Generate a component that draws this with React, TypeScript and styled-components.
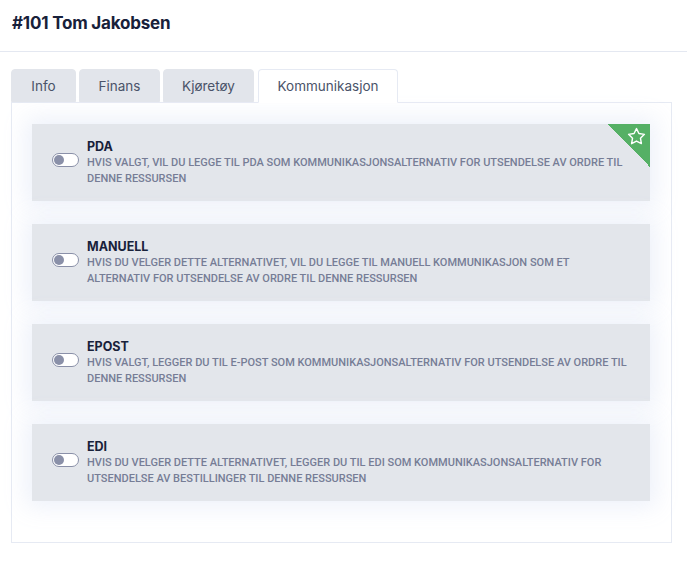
import React from "react";
import styled, { createGlobalStyle } from "styled-components";

const Global = createGlobalStyle`
  html, body { margin: 0; padding: 0; background: #ffffff; }
  body { font-family: Inter, "Noto Sans", sans-serif; }
`;

const Page = styled.div`
  width: 687px;
  height: 561px;
  background: #fff;
  display: flex;
  flex-direction: column;
`;

const Header = styled.header`
  height: 52px;
  box-sizing: border-box;
  border-bottom: 1px solid #e4e8f1;
  padding: 13px 12px 0;
`;

const Title = styled.h1`
  margin: 0;
  font-size: 17px;
  font-weight: 700;
  color: #18213a;
  letter-spacing: -0.2px;
`;

const Body = styled.div`
  padding: 17px 15px 0 11px;
`;

const Tabs = styled.div`
  display: flex;
  gap: 3px;
  height: 33px;
  position: relative;
  z-index: 1;
`;

const Tab = styled.div<{ $active?: boolean; $w: number }>`
  width: ${(p) => p.$w}px;
  box-sizing: border-box;
  display: flex;
  align-items: center;
  justify-content: center;
  font-size: 13.5px;
  color: #4a5369;
  border-radius: 4px 4px 0 0;
  background: ${(p) => (p.$active ? "#ffffff" : "#e2e5eb")};
  border: 1px solid ${(p) => (p.$active ? "#e6eaf3" : "#e2e5eb")};
  border-bottom: ${(p) => (p.$active ? "1px solid #fff" : "1px solid #e2e5eb")};
  height: ${(p) => (p.$active ? "34px" : "33px")};
  margin-left: ${(p) => (p.$active ? "1px" : "0")};
`;

const Panel = styled.div`
  border: 1px solid #e6eaf3;
  height: 441px;
  box-sizing: border-box;
  padding: 21px 21px 0 20px;
  display: flex;
  flex-direction: column;
  gap: 23px;
`;

const Card = styled.div`
  position: relative;
  overflow: hidden;
  height: 77px;
  background: #e3e6eb;
  box-shadow: 0 0 22px 6px rgba(235, 240, 250, 0.9);
  display: flex;
  align-items: center;
  padding: 0 22px 0 20px;
  gap: 8px;
`;

const Toggle = styled.div`
  flex: none;
  width: 27px;
  height: 14px;
  box-sizing: border-box;
  border-radius: 8px;
  background: #fff;
  border: 1px solid #8a90a8;
  position: relative;
  margin-top: -5px;
  &::after {
    content: "";
    position: absolute;
    left: 1px;
    top: 1px;
    width: 10px;
    height: 10px;
    border-radius: 50%;
    background: #8a90a8;
  }
`;

const Text = styled.div`
  display: flex;
  flex-direction: column;
`;

const CardTitle = styled.div`
  font-size: 12.5px;
  font-weight: 700;
  color: #18213a;
  line-height: 16px;
`;

const Desc = styled.div`
  font-family: Roboto, "Noto Sans", sans-serif;
  font-size: 11px;
  font-weight: 500;
  color: #767d96;
  line-height: 16px;
  text-transform: uppercase;
  letter-spacing: 0;
`;

const Corner = styled.div`
  position: absolute;
  top: 0;
  right: 0;
  width: 43px;
  height: 43px;
  background: linear-gradient(to bottom left, #55b065 50%, transparent 50%);
`;

const StarIcon = styled.svg`
  position: absolute;
  top: 3px;
  right: 4px;
`;

const items = [
  {
    t: "PDA",
    d: "Hvis valgt, vil du legge til PDA som kommunikasjonsalternativ for utsendelse av ordre til denne ressursen",
    star: true,
  },
  {
    t: "MANUELL",
    d: "Hvis du velger dette alternativet, vil du legge til manuell kommunikasjon som et alternativ for utsendelse av ordre til denne ressursen",
  },
  {
    t: "EPOST",
    d: "Hvis valgt, legger du til e-post som kommunikasjonsalternativ for utsendelse av ordre til denne ressursen",
  },
  {
    t: "EDI",
    d: "Hvis du velger dette alternativet, legger du til EDI som kommunikasjonsalternativ for utsendelse av bestillinger til denne ressursen",
  },
];

export default function App() {
  return (
    <Page>
      <Global />
      <Header>
        <Title>#101 Tom Jakobsen</Title>
      </Header>
      <Body>
        <Tabs>
          <Tab $w={65}>Info</Tab>
          <Tab $w={81}>Finans</Tab>
          <Tab $w={91}>Kjøretøy</Tab>
          <Tab $w={140} $active>Kommunikasjon</Tab>
        </Tabs>
        <Panel>
          {items.map((it) => (
            <Card key={it.t}>
              <Toggle />
              <Text>
                <CardTitle>{it.t}</CardTitle>
                <Desc>{it.d}</Desc>
              </Text>
              {it.star && (
                <Corner>
                  <StarIcon width="19" height="19" viewBox="0 0 24 24" fill="none" stroke="#fff" strokeWidth="1.8" strokeLinejoin="round">
                    <polygon points="12 2 15.09 8.26 22 9.27 17 14.14 18.18 21.02 12 17.77 5.82 21.02 7 14.14 2 9.27 8.91 8.26 12 2" />
                  </StarIcon>
                </Corner>
              )}
            </Card>
          ))}
        </Panel>
      </Body>
    </Page>
  );
}
